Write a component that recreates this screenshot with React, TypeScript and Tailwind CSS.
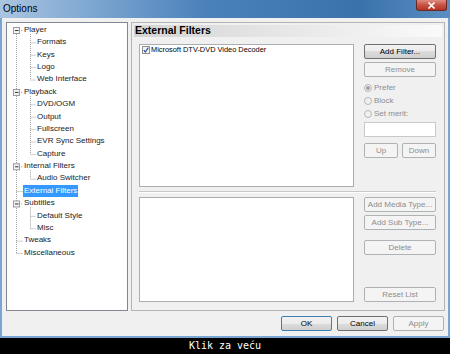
import React from 'react';

const font = { fontFamily: '"Liberation Sans", Arial, sans-serif' };

type Node = { label: string; level: number; expander?: boolean; selected?: boolean };

const tree: Node[] = [
  { label: 'Player', level: 0, expander: true },
  { label: 'Formats', level: 1 },
  { label: 'Keys', level: 1 },
  { label: 'Logo', level: 1 },
  { label: 'Web Interface', level: 1 },
  { label: 'Playback', level: 0, expander: true },
  { label: 'DVD/OGM', level: 1 },
  { label: 'Output', level: 1 },
  { label: 'Fullscreen', level: 1 },
  { label: 'EVR Sync Settings', level: 1 },
  { label: 'Capture', level: 1 },
  { label: 'Internal Filters', level: 0, expander: true },
  { label: 'Audio Switcher', level: 1 },
  { label: 'External Filters', level: 0, selected: true },
  { label: 'Subtitles', level: 0, expander: true },
  { label: 'Default Style', level: 1 },
  { label: 'Misc', level: 1 },
  { label: 'Tweaks', level: 0 },
  { label: 'Miscellaneous', level: 0 },
];

const ROW = 12.39;
const cy = (i: number) => 7 + ROW * i;

function TreeLines() {
  const lines: React.ReactNode[] = [];
  const last = tree.length - 1;
  lines.push(<line key="v" x1={9.5} y1={cy(0)} x2={9.5} y2={cy(last)} />);
  tree.forEach((n, i) => {
    if (n.level === 0) {
      lines.push(<line key={'h' + i} x1={n.expander ? 12 : 9.5} y1={cy(i) + 0.5} x2={16} y2={cy(i) + 0.5} />);
      if (n.expander) {
        let j = i + 1;
        while (j < tree.length && tree[j].level === 1) j++;
        lines.push(<line key={'cv' + i} x1={23.5} y1={cy(i) + 4} x2={23.5} y2={cy(j - 1)} />);
      }
    } else {
      lines.push(<line key={'ch' + i} x1={23.5} y1={cy(i) + 0.5} x2={29} y2={cy(i) + 0.5} />);
    }
  });
  return (
    <svg className="absolute left-0 top-0" width="120" height="287">
      <g stroke="#a0a0a0" strokeWidth="1" strokeDasharray="1 1" fill="none">{lines}</g>
      {tree.map((n, i) =>
        n.expander ? (
          <g key={'b' + i}>
            <rect x={6.5} y={cy(i) - 2.5} width={6} height={6} fill="#f4f4f4" stroke="#9a9a9a" />
            <line x1={8} y1={cy(i) + 0.5} x2={11.5} y2={cy(i) + 0.5} stroke="#333" />
          </g>
        ) : null
      )}
    </svg>
  );
}

function Btn({ label, disabled, w = 'w-[72px]', def }: { label: string; disabled?: boolean; w?: string; def?: boolean }) {
  const base = 'h-[15px] flex items-center justify-center rounded-[2px] text-[8px] leading-none';
  if (disabled)
    return <div className={`${base} ${w} border border-[#adb2b5] bg-[#f4f4f4] text-[#8d8d8d]`}>{label}</div>;
  return (
    <div
      className={`${base} ${w} border ${def ? 'border-[#3c7fb1]' : 'border-[#707070]'} bg-[linear-gradient(#f2f2f2,#ebebeb_50%,#dddddd_50%,#cfcfcf)] text-black`}
    >
      {label}
    </div>
  );
}

function Radio({ label, checked }: { label: string; checked?: boolean }) {
  return (
    <div className="h-[13px] flex items-center gap-[2px] text-[8px] text-[#8d8d8d]">
      <div className="w-[8px] h-[8px] rounded-full border border-[#b8b8b8] bg-[#f0f0f0] flex items-center justify-center">
        {checked && <div className="w-[4px] h-[4px] rounded-full bg-[#a0a0a0]" />}
      </div>
      <span>{label}</span>
    </div>
  );
}

export default function App() {
  return (
    <div className="w-[450px] h-[354px] bg-black flex flex-col" style={font}>
      <div className="h-[338px] flex flex-col">
        <div className="h-[18px] flex items-start bg-[linear-gradient(90deg,#aac5e1,#7ea7d2_20%,#4b82bb_45%,#3a72ab_80%,#5a8ec3)] relative">
          <span className="text-[10px] leading-none text-black pl-[3px] pt-[4px]">Options</span>
          <div className="absolute right-[3px] top-0 w-[31px] h-[11px] rounded-b-[3px] border border-t-0 border-[#6b2a22] bg-[linear-gradient(#e08c7e,#c75344_50%,#b83222)] flex items-center justify-center">
            <svg width="9" height="7" viewBox="0 0 9 7">
              <path d="M1.5 0.5 L7.5 6.5 M7.5 0.5 L1.5 6.5" stroke="#fff" strokeWidth="1.6" />
            </svg>
          </div>
        </div>
        <div className="flex-1 flex flex-col bg-[#f0f0f0] border-x-2 border-b-2 border-[#7aa5d2]">
          <div className="flex pt-[4px] pl-[4px] pr-[3px] gap-[3px]">
            <div className="w-[122px] h-[289px] bg-white border border-[#828790] relative">
              <TreeLines />
              <div className="relative pt-[0.8px]">
                {tree.map((n) => (
                  <div
                    key={n.label}
                    className={`h-[12.39px] flex items-center text-[8px] leading-none ${n.level === 0 ? 'pl-[16px]' : 'pl-[29px]'}`}
                  >
                    <span className={n.selected ? 'bg-[#3399ff] text-white px-[1px] py-[2px]' : 'text-[#1a1a1a] px-[1px]'}>
                      {n.label}
                    </span>
                  </div>
                ))}
              </div>
            </div>
            <div className="w-[314px] h-[289px] border border-[#b4b4b4] p-[2px] flex flex-col">
              <div className="h-[12px] flex items-center pl-[1px] bg-[linear-gradient(90deg,#d4d4d4,#fafafa)] text-[10.5px] font-bold text-black">
                External Filters
              </div>
              <div className="pl-[5px] pt-[7px] pr-[6px] flex flex-col">
                <div className="flex gap-[10px] h-[143px]">
                  <div className="w-[215px] h-[143px] bg-white border border-[#abadb3]">
                    <div className="flex items-center gap-[1px] pl-[2px] pt-[1px] text-[7.4px] leading-none text-black">
                      <div className="w-[8px] h-[8px] border border-[#8f8f8f] bg-[#f4f4f4] flex items-center justify-center">
                        <svg width="6" height="6" viewBox="0 0 6 6">
                          <path d="M0.8 3 L2.3 5 L5.3 0.6" stroke="#2b4ea0" strokeWidth="1.2" fill="none" />
                        </svg>
                      </div>
                      <span>Microsoft DTV-DVD Video Decoder</span>
                    </div>
                  </div>
                  <div className="w-[72px] flex flex-col">
                    <Btn label="Add Filter..." />
                    <div className="mt-[3px]">
                      <Btn label="Remove" disabled />
                    </div>
                    <div className="mt-[4px]">
                      <Radio label="Prefer" checked />
                      <Radio label="Block" />
                      <Radio label="Set merit:" />
                    </div>
                    <div className="mt-[2px] h-[15px] bg-white border border-[#c9c9c9]" />
                    <div className="mt-[6px] flex justify-between">
                      <Btn label="Up" disabled w="w-[34px]" />
                      <Btn label="Down" disabled w="w-[34px]" />
                    </div>
                  </div>
                </div>
                <div className="h-[10px] flex flex-col justify-center">
                  <div className="h-[2px] w-[297px] border-t border-[#c8c8c8] border-b border-b-white" />
                </div>
                <div className="flex gap-[10px] h-[105px]">
                  <div className="w-[215px] h-[105px] bg-white border border-[#abadb3]" />
                  <div className="w-[72px] flex flex-col">
                    <Btn label="Add Media Type..." disabled />
                    <div className="mt-[3px]">
                      <Btn label="Add Sub Type..." disabled />
                    </div>
                    <div className="mt-[10px]">
                      <Btn label="Delete" disabled />
                    </div>
                    <div className="mt-auto">
                      <Btn label="Reset List" disabled />
                    </div>
                  </div>
                </div>
              </div>
            </div>
          </div>
          <div className="flex justify-end gap-[5px] pr-[4px] mt-[5px]">
            <Btn label="OK" def w="w-[51px]" />
            <Btn label="Cancel" w="w-[51px]" />
            <Btn label="Apply" disabled w="w-[51px]" />
          </div>
        </div>
      </div>
      <div className="flex-1 flex items-center justify-center text-white text-[10px] leading-none" style={{ fontFamily: '"DejaVu Sans Mono", monospace' }}>
        Klik za veću
      </div>
    </div>
  );
}
